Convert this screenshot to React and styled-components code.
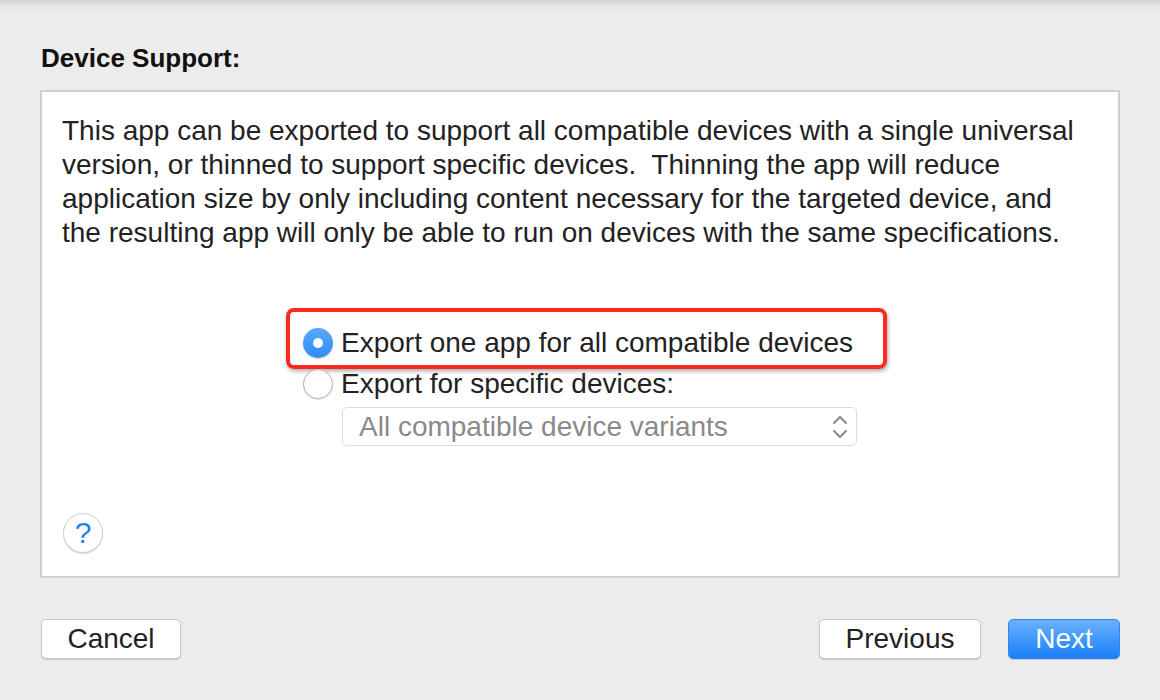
import React from 'react'
import styled, { createGlobalStyle, css } from 'styled-components'

const GlobalStyle = createGlobalStyle`
  html, body {
    margin: 0;
    padding: 0;
    background: #ececec;
  }
  body {
    font-family: "Liberation Sans", Arial, sans-serif;
    color: #222;
  }
`

const Sheet = styled.div`
  width: 1160px;
  height: 700px;
  box-sizing: border-box;
  background: linear-gradient(#d3d3d3 0px, #e6e6e6 6px, #ececec 12px);
  display: flex;
  flex-direction: column;
  padding: 43px 40px 0 40px;
`

const Title = styled.h2`
  margin: 0 0 0 1px;
  font-size: 26px;
  line-height: 30px;
  font-weight: bold;
  color: #111;
`

const Panel = styled.div`
  margin-top: 17px;
  height: 488px;
  box-sizing: border-box;
  background: #fff;
  border: 2px solid #cfcfcf;
  padding: 22px 20px 23px 20px;
  display: flex;
  flex-direction: column;
`

const Description = styled.p`
  margin: 0;
  font-size: 28px;
  line-height: 34px;
  white-space: nowrap;
  color: #222;
`

const Options = styled.div`
  align-self: center;
  width: 554px;
  margin-top: 72px;
  display: flex;
  flex-direction: column;
`

const OptionRow = styled.label`
  position: relative;
  display: flex;
  align-items: center;
  gap: 8px;
  height: 41px;
  font-size: 28px;
  white-space: nowrap;
  color: #222;
`

const Highlight = styled.div`
  position: absolute;
  left: -17px;
  right: -30px;
  top: -14px;
  bottom: -6px;
  border: 4px solid #fb2a1d;
  border-radius: 8px;
  box-shadow: 1px 2px 4px rgba(0, 0, 0, 0.35);
  pointer-events: none;
`

const Radio = styled.span`
  width: 30px;
  height: 30px;
  box-sizing: border-box;
  border-radius: 50%;
  flex: none;
  display: flex;
  align-items: center;
  justify-content: center;
  ${({ checked }) => checked
    ? css`
      background: linear-gradient(#5aa8fb, #2f8cf6);
      box-shadow: 0 1px 1px rgba(0, 0, 0, 0.2);
      &::after {
        content: '';
        width: 10px;
        height: 10px;
        border-radius: 50%;
        background: #fff;
      }
    `
    : css`
      background: #fff;
      border: 1px solid #b4b4b4;
      box-shadow: 0 1px 1px rgba(0, 0, 0, 0.12);
    `}
`

const Popup = styled.div`
  margin-left: 39px;
  margin-top: 3px;
  height: 39px;
  box-sizing: border-box;
  border: 1px solid #dcdcdc;
  border-radius: 5px;
  padding: 0 7px 0 16px;
  display: flex;
  align-items: center;
  justify-content: space-between;
  font-size: 28px;
  white-space: nowrap;
  color: #8a8a8a;
`

const HelpButton = styled.button`
  margin-top: auto;
  margin-left: 1px;
  width: 40px;
  height: 40px;
  border-radius: 50%;
  border: 1px solid #cfcfcf;
  background: #fff;
  box-shadow: 0 1px 1px rgba(0, 0, 0, 0.15);
  color: #1f7ef7;
  font-family: "Liberation Sans", Arial, sans-serif;
  font-size: 30px;
  padding: 0;
  display: flex;
  align-items: center;
  justify-content: center;
`

const Footer = styled.div`
  margin-top: 41px;
  display: flex;
  align-items: center;
  gap: 27px;
  padding-left: 1px;
`

const Spacer = styled.div`
  flex: 1;
`

const Button = styled.button`
  height: 40px;
  width: ${({ width }) => width}px;
  box-sizing: border-box;
  border-radius: 5px;
  font-family: "Liberation Sans", Arial, sans-serif;
  font-size: 28px;
  padding: 0;
  ${({ primary }) => primary
    ? css`
      color: #fff;
      border: 1px solid #2a86f6;
      background: linear-gradient(#6ab2fb, #1a7ffa);
      box-shadow: 0 1px 1px rgba(0, 0, 0, 0.15);
    `
    : css`
      color: #222;
      border: 1px solid #c6c6c6;
      background: #fff;
      box-shadow: 0 1px 1px rgba(0, 0, 0, 0.15);
    `}
`

function Chevrons() {
  return (
    <svg width="18" height="28" viewBox="0 0 18 28" fill="none" stroke="#8c8c8c" strokeWidth="2.2" strokeLinecap="round" strokeLinejoin="round">
      <polyline points="3,10 9,4 15,10" />
      <polyline points="3,18 9,24 15,18" />
    </svg>
  )
}

export default function App() {
  return (
    <>
      <GlobalStyle />
      <Sheet>
        <Title>Device Support:</Title>
        <Panel>
          <Description>
            This app can be exported to support all compatible devices with a single universal<br />
            version, or thinned to support specific devices.&nbsp; Thinning the app will reduce<br />
            application size by only including content necessary for the targeted device, and<br />
            the resulting app will only be able to run on devices with the same specifications.
          </Description>
          <Options>
            <OptionRow>
              <Highlight />
              <Radio checked />
              Export one app for all compatible devices
            </OptionRow>
            <OptionRow>
              <Radio />
              Export for specific devices:
            </OptionRow>
            <Popup>
              All compatible device variants
              <Chevrons />
            </Popup>
          </Options>
          <HelpButton>?</HelpButton>
        </Panel>
        <Footer>
          <Button width={140}>Cancel</Button>
          <Spacer />
          <Button width={162}>Previous</Button>
          <Button width={112} primary>Next</Button>
        </Footer>
      </Sheet>
    </>
  )
}
